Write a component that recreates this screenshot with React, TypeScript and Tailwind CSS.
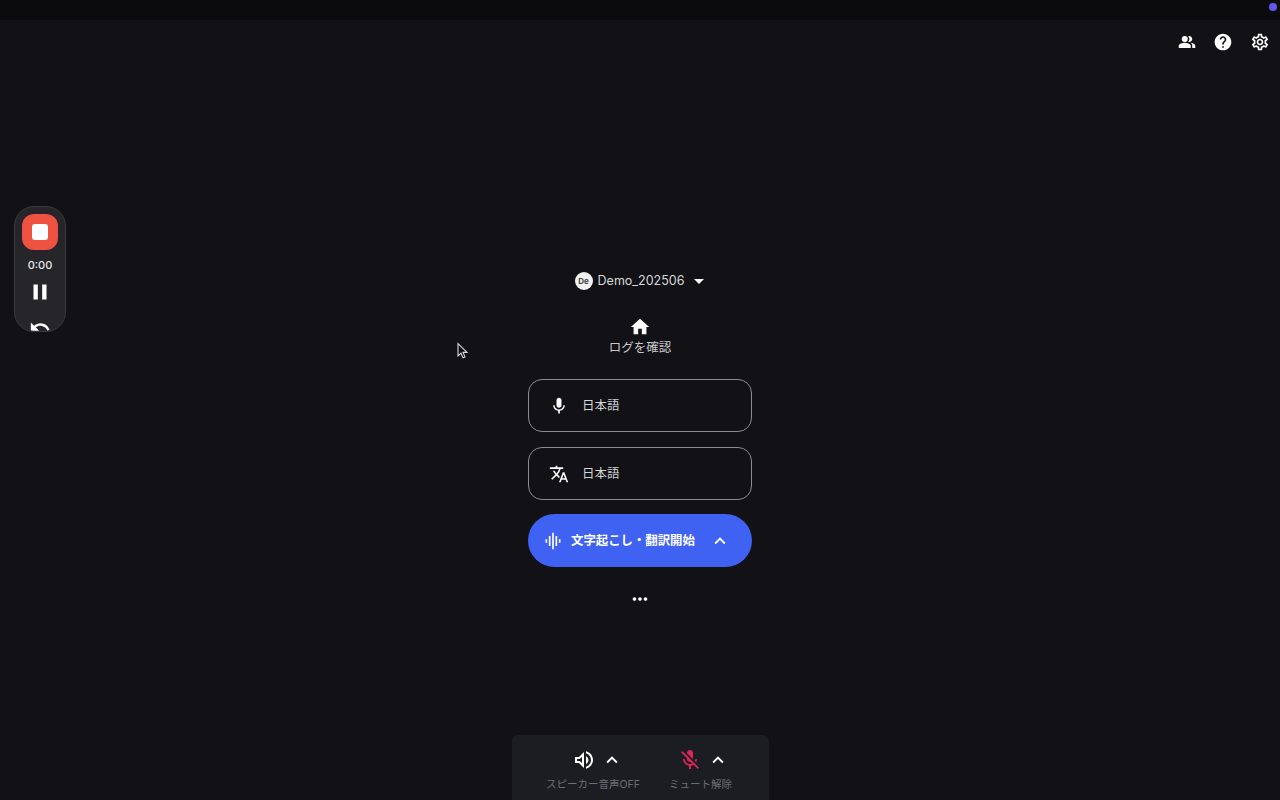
import {
  MdPeopleAlt,
  MdHelp,
  MdOutlineSettings,
  MdHome,
  MdMic,
  MdTranslate,
  MdGraphicEq,
  MdKeyboardArrowUp,
  MdArrowDropDown,
  MdMoreHoriz,
  MdOutlineVolumeUp,
  MdMicOff,
  MdPause,
  MdUndo,
} from 'react-icons/md';

const font = 'font-["Inter","Noto_Sans_CJK_JP",sans-serif]';

const LanguageRow = ({ icon, label }: { icon: React.ReactNode; label: string }) => (
  <div className="flex h-[53px] w-[224px] items-center rounded-[14px] border border-[#8c8c90] pl-[20px]">
    <span className="flex w-5 justify-center text-white">{icon}</span>
    <span className="ml-[13px] pt-[1px] text-[12.5px] text-[#d4d4d6]">{label}</span>
  </div>
);

const RecorderPill = () => (
  <div className="absolute left-[14px] top-[206px] flex h-[126px] w-[52px] flex-col items-center overflow-hidden rounded-[20px] border border-[#3a3a3e] bg-[#26262a] pt-[7px]">
    <div className="flex h-9 w-9 shrink-0 items-center justify-center rounded-[12px] bg-[#ef5240]">
      <div className="h-4 w-4 rounded-[3px] bg-white" />
    </div>
    <span className="mt-[8px] text-[11px] font-medium leading-[14px] text-[#e8e8ea]">0:00</span>
    <MdPause className="mt-[7px] shrink-0 text-white" size={26} />
    <MdUndo className="mt-[11px] shrink-0 text-white" size={22} />
  </div>
);

const Cursor = () => (
  <svg className="absolute left-[456px] top-[342px]" width="13" height="18" viewBox="0 0 13 18">
    <path d="M2 1.5v12.5l3-2.8 2 4.6 2-.9-2-4.5h4z" fill="#101014" stroke="#d8d8d8" strokeWidth="1.1" />
  </svg>
);

export default function App() {
  return (
    <div className={`relative flex h-screen w-full flex-col overflow-hidden bg-[#111116] ${font}`}>
      {/* top strip */}
      <div className="flex h-5 shrink-0 justify-end bg-[#0b0b0d] pr-[3px] pt-[3px]">
        <div className="h-2 w-2 rounded-full bg-[#6655ee]" />
      </div>

      {/* header actions */}
      <div className="flex h-[43px] shrink-0 items-center justify-end gap-[16px] pr-[10px] pt-[1px] text-white">
        <MdPeopleAlt className="mx-[1px]" size={18} />
        <MdHelp className="mr-[1px]" size={20} />
        <MdOutlineSettings size={20} />
      </div>

      {/* main column */}
      <div className="flex flex-1 flex-col items-center pt-[208px]">
        <div className="flex h-5 items-center pl-[6px]">
          <div className="flex h-[18px] w-[18px] items-center justify-center rounded-full bg-[#f2f2f2] text-[8px] font-bold text-[#444]">
            De
          </div>
          <span className="ml-[5px] text-[12.5px] text-[#d8d8da]">Demo_202506</span>
          <MdArrowDropDown className="ml-[3px] text-white" size={24} />
        </div>

        <MdHome className="mt-[25px] text-white" size={22} />
        <span className="mt-[1px] text-[12.5px] leading-[18px] text-[#c8c8ca]">ログを確認</span>

        <div className="mt-[22px] flex flex-col gap-[15px]">
          <LanguageRow icon={<MdMic size={20} />} label="日本語" />
          <LanguageRow icon={<MdTranslate size={20} />} label="日本語" />
        </div>

        <div className="mt-[14px] flex h-[53px] w-[224px] items-center rounded-[27px] bg-[#3f62f2] pl-[15px] text-white">
          <MdGraphicEq size={20} />
          <span className="ml-[8px] pt-[1px] text-[12.4px] font-semibold">文字起こし・翻訳開始</span>
          <MdKeyboardArrowUp className="ml-[14px]" size={22} />
        </div>

        <MdMoreHoriz className="mt-[21px] text-white" size={22} />
      </div>

      {/* bottom audio controls */}
      <div className="flex shrink-0 justify-center">
        <div className="flex h-[65px] w-[257px] justify-center gap-[28px] rounded-t-[6px] bg-[#1c1c23] pt-[13px]">
          <div className="flex w-[93px] flex-col items-center">
            <div className="flex h-6 items-center gap-[5px] pl-[8px] text-white">
              <MdOutlineVolumeUp size={24} />
              <MdKeyboardArrowUp size={22} />
            </div>
            <span className="mt-[5px] whitespace-nowrap text-[10.5px] leading-[16px] text-[#6e6e76]">スピーカー音声OFF</span>
          </div>
          <div className="flex w-[66px] flex-col items-center">
            <div className="flex h-6 items-center gap-[5px] pl-[5px]">
              <MdMicOff className="text-[#e0245e]" size={24} />
              <MdKeyboardArrowUp className="text-white" size={22} />
            </div>
            <span className="mt-[5px] whitespace-nowrap text-[10.5px] leading-[16px] text-[#6e6e76]">ミュート解除</span>
          </div>
        </div>
      </div>

      <RecorderPill />
      <Cursor />
    </div>
  );
}
